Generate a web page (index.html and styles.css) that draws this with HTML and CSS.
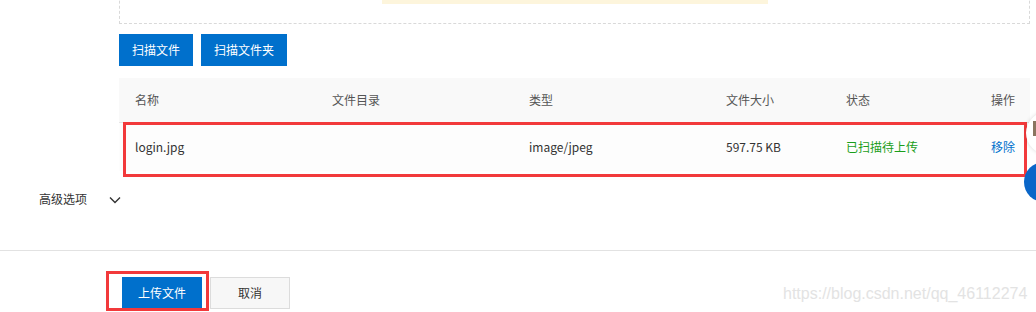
FILE: index.html
```html
<!DOCTYPE html>
<html lang="zh-CN">
<head>
<meta charset="utf-8">
<title>上传文件</title>
<link rel="stylesheet" href="styles.css">
</head>
<body>
<div class="page">
  <section class="upload-panel">
    <div class="dropzone">
      <div class="dropzone-tip"></div>
    </div>
    <div class="scan-actions">
      <button class="btn btn-primary">扫描文件</button>
      <button class="btn btn-primary">扫描文件夹</button>
    </div>
    <div class="file-table">
      <div class="table-head grid-row">
        <span>名称</span>
        <span>文件目录</span>
        <span>类型</span>
        <span>文件大小</span>
        <span>状态</span>
        <span>操作</span>
      </div>
      <div class="table-row grid-row marked">
        <span>login.jpg</span>
        <span></span>
        <span>image/jpeg</span>
        <span>597.75 KB</span>
        <span class="status-ok">已扫描待上传</span>
        <a class="link">移除</a>
      </div>
    </div>
  </section>

  <div class="advanced">
    <span class="advanced-label">高级选项</span>
    <svg class="chevron" width="12" height="8" viewBox="0 0 12 8"><path d="M1 1.5 L6 6.5 L11 1.5" fill="none" stroke="#333" stroke-width="1.4"/></svg>
  </div>

  <footer class="footer">
    <div class="footer-actions">
      <button class="btn btn-primary btn-wide marked-btn">上传文件</button>
      <button class="btn btn-default btn-wide">取消</button>
    </div>
  </footer>

  <div class="float-tool">
    <span class="float-icon"></span>
  </div>
  <div class="float-dot"></div>
  <div class="watermark">https://blog.csdn.net/qq_46112274</div>
</div>
</body>
</html>
```

FILE: styles.css
```css
* { box-sizing: border-box; }

html, body {
  margin: 0;
  padding: 0;
  background: #fff;
}

body {
  font-family: "Noto Sans CJK SC", "Noto Sans", sans-serif;
  font-size: 12px;
  color: #333;
}

.page {
  position: relative;
  width: 1036px;
  height: 312px;
  overflow: hidden;
}

.upload-panel {
  margin-left: 119px;
  width: 911px;
}

.dropzone {
  height: 64px;
  margin-top: -40px;
  border: 1px dashed #d9d9d9;
  display: flex;
  justify-content: center;
  align-items: flex-start;
}

.dropzone-tip {
  width: 386px;
  height: 43px;
  background: #fdf5dc;
}

.scan-actions {
  display: flex;
  gap: 8px;
  margin-top: 10px;
}

.btn {
  height: 32px;
  padding: 0 13px;
  border: none;
  font-family: inherit;
  font-size: 12px;
  line-height: 32px;
  cursor: pointer;
}

.btn-primary {
  background: #0070cc;
  color: #fff;
}

.btn-default {
  background: #f7f7f7;
  color: #333;
  border: 1px solid #dcdcdc;
  line-height: 30px;
}

.btn-wide {
  width: 80px;
  padding: 0;
}

.file-table {
  margin-top: 12px;
}

.grid-row {
  display: grid;
  grid-template-columns: 197px 197px 197px 120px 1fr auto;
  align-items: center;
  padding: 0 15px 0 16px;
  line-height: 16px;
}

.table-head {
  height: 45px;
  background: #f9f9f9;
  border-bottom: 1px solid #e6e6e6;
  color: #555;
}

.table-row {
  height: 48px;
  background: #fdfdfd;
  color: #333;
}

.marked {
  position: relative;
}

.marked::after {
  content: "";
  position: absolute;
  left: 4px;
  right: 3px;
  top: -1px;
  bottom: -6px;
  border: 3px solid #f2393b;
  pointer-events: none;
}

.status-ok {
  color: #1a9e1a;
}

.link {
  color: #0070cc;
  cursor: pointer;
}

.advanced {
  display: flex;
  align-items: center;
  height: 24px;
  margin-top: 16px;
  padding-left: 39px;
  line-height: 16px;
}

.advanced-label {
  width: 70px;
  color: #333;
}

.chevron {
  display: block;
  margin-top: 1px;
}

.footer {
  margin-top: 39px;
  border-top: 1px solid #e2e2e2;
  padding: 26px 0 0 122px;
}

.footer-actions {
  display: flex;
  gap: 8px;
}

.marked-btn {
  position: relative;
}

.marked-btn::after {
  content: "";
  position: absolute;
  left: -16px;
  top: -6px;
  right: -7px;
  bottom: -2px;
  border: 3px solid #f2393b;
  pointer-events: none;
}

.float-tool {
  position: absolute;
  left: 1026px;
  top: 112px;
  width: 42px;
  height: 42px;
  border-radius: 50%;
  background: #fff;
  box-shadow: 0 0 4px rgba(0, 0, 0, 0.15);
}

.float-icon {
  position: absolute;
  left: 7px;
  top: 9px;
  width: 3px;
  height: 15px;
  background: #8a7560;
}

.float-dot {
  position: absolute;
  left: 1024px;
  top: 162px;
  width: 40px;
  height: 40px;
  border-radius: 50%;
  background: #0a66c8;
}

.watermark {
  position: absolute;
  left: 783px;
  top: 284px;
  font-family: "Liberation Sans", Arial, sans-serif;
  font-size: 16px;
  line-height: 20px;
  color: #e3e3e3;
  white-space: nowrap;
}
```
